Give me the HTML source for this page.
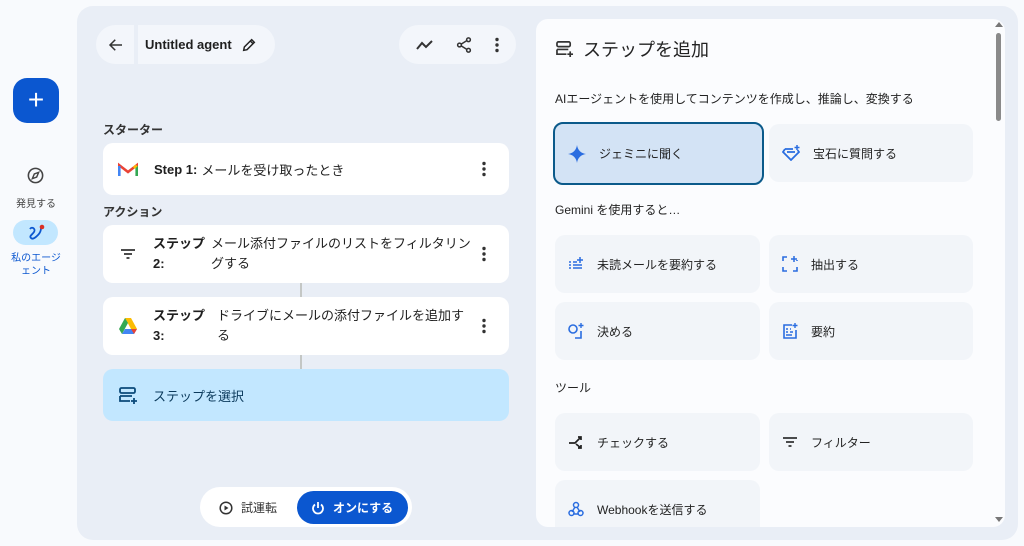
<!DOCTYPE html>
<html><head><meta charset="utf-8"><style>
*{box-sizing:border-box;margin:0;padding:0}
body{width:1024px;height:546px;background:#f8fafd;font-family:"Liberation Sans","Noto Sans CJK JP",sans-serif;color:#1f1f1f;position:relative;overflow:hidden}
.abs{position:absolute}
.main{left:77px;top:6px;width:941px;height:534px;background:#e9eef6;border-radius:16px}
.fab{left:13px;top:78px;width:46px;height:45px;background:#0b57d0;border-radius:14px;color:#fff;font-size:28px;line-height:43px;text-align:center;font-weight:300}
.nav{font-size:10px;color:#444;text-align:center}
.pill{background:#f3f6fb;border-radius:20px;display:flex;align-items:center}
.card{left:103px;width:406px;background:#fff;border-radius:10px;display:flex;align-items:center;font-size:13px}
.lbl{font-size:12px;color:#333;font-weight:bold}
.dots{position:absolute;right:22px;top:50%;transform:translateY(-50%)}
.rp{left:536px;top:19px;width:469px;height:508px;background:#fbfcfe;border-radius:12px;overflow:hidden}
.opt{position:absolute;background:#f2f5f9;border-radius:10px;display:flex;align-items:center;font-size:12px;color:#222}
.opt svg{margin-left:13px;margin-right:13px}
.sec{position:absolute;font-size:12px;color:#222;left:19px}
</style></head><body>
<div class="abs fab">+</div>
<svg class="abs" style="left:26px;top:166px" width="19" height="19" viewBox="0 0 24 24"><circle cx="12" cy="12" r="9" fill="none" stroke="#444" stroke-width="2"/><path d="M8 16l2.5-6 5.5-2-2.5 6z" fill="none" stroke="#444" stroke-width="1.8"/></svg>
<div class="abs nav" style="left:0;width:72px;top:195px">発見する</div>
<div class="abs" style="left:13px;top:220px;width:45px;height:25px;background:#c2e7ff;border-radius:13px"></div>
<svg class="abs" style="left:26px;top:223px" width="20" height="20" viewBox="0 0 20 20"><path d="M4 6c2-3 6 0 4 3s-5 4-3 6 5-1 7-3 3-4 3-7" fill="none" stroke="#0b57d0" stroke-width="1.8"/><circle cx="16" cy="4" r="2.3" fill="#d93025"/></svg>
<div class="abs nav" style="left:0;width:72px;top:252px;color:#0b57d0;line-height:13px">私のエージ<br>ェント</div>

<div class="abs main"></div>
<div class="abs pill" style="left:96px;top:25px;width:38px;height:39px;border-radius:20px 0 0 20px"><svg style="margin-left:11px" width="18" height="18" viewBox="0 0 24 24"><path d="M20 12H5M11 5l-7 7 7 7" fill="none" stroke="#333" stroke-width="2"/></svg></div>
<div class="abs pill" style="left:138px;top:25px;width:137px;height:39px;border-radius:0 20px 20px 0;font-size:13px;font-weight:600;padding-left:7px">Untitled agent<svg style="margin-left:9px" width="16" height="16" viewBox="0 0 24 24"><path d="M4 20l1-5L16 4l4 4L9 19z M14 6l4 4" fill="none" stroke="#222" stroke-width="2.2"/></svg></div>
<div class="abs pill" style="left:399px;top:25px;width:117px;height:39px;justify-content:space-around;padding:0 6px">
<svg width="20" height="14" viewBox="0 0 20 14"><path d="M2 11l5-6 4 4 6-6" fill="none" stroke="#333" stroke-width="2"/></svg>
<svg width="18" height="18" viewBox="0 0 24 24"><circle cx="18" cy="5" r="2.5" fill="none" stroke="#333" stroke-width="2"/><circle cx="6" cy="12" r="2.5" fill="none" stroke="#333" stroke-width="2"/><circle cx="18" cy="19" r="2.5" fill="none" stroke="#333" stroke-width="2"/><path d="M8 11l8-5M8 13l8 5" stroke="#333" stroke-width="2"/></svg>
<svg width="6" height="16" viewBox="0 0 6 16"><circle cx="3" cy="2.5" r="1.7" fill="#333"/><circle cx="3" cy="8" r="1.7" fill="#333"/><circle cx="3" cy="13.5" r="1.7" fill="#333"/></svg></div>

<div class="abs lbl" style="left:103px;top:121px">スターター</div>
<div class="abs card" style="top:143px;height:52px"><svg style="margin:0 16px 0 15px" width="20" height="15" viewBox="0 0 20 15"><path d="M1 14V3l9 7 9-7v11" fill="none" stroke="#ea4335" stroke-width="2.6"/><path d="M1.3 14V4" stroke="#4285f4" stroke-width="2.6"/><path d="M18.7 14V4" stroke="#34a853" stroke-width="2.6"/><path d="M18.7 3.5l-3 2.3" stroke="#fbbc04" stroke-width="2.6"/></svg><b style="margin-right:4px">Step 1:</b> メールを受け取ったとき<svg class="dots" width="6" height="16" viewBox="0 0 6 16"><circle cx="3" cy="2.5" r="1.7" fill="#333"/><circle cx="3" cy="8" r="1.7" fill="#333"/><circle cx="3" cy="13.5" r="1.7" fill="#333"/></svg></div>
<div class="abs lbl" style="left:103px;top:203px">アクション</div>
<div class="abs card" style="top:225px;height:58px;line-height:20px"><svg style="margin:0 17px 0 17px" width="16" height="12" viewBox="0 0 16 12"><path d="M1 2h14M4 6h8M6.5 10h3" stroke="#333" stroke-width="1.8"/></svg><b style="width:58px">ステップ<br>2:</b><span style="width:270px">メール添付ファイルのリストをフィルタリングする</span><svg class="dots" width="6" height="16" viewBox="0 0 6 16"><circle cx="3" cy="2.5" r="1.7" fill="#333"/><circle cx="3" cy="8" r="1.7" fill="#333"/><circle cx="3" cy="13.5" r="1.7" fill="#333"/></svg></div>
<div class="abs" style="left:300px;top:283px;width:2px;height:14px;background:#c4c7c5"></div>
<div class="abs card" style="top:297px;height:58px;line-height:20px"><svg style="margin:0 15px 0 15px" width="20" height="18" viewBox="0 0 20 18"><path d="M7 1h6l6 11H13z" fill="#fbbc04"/><path d="M7 1L1 12l3 5 6-11z" fill="#34a853"/><path d="M4 17h12l3-5H7z" fill="#4285f4"/><path d="M16 17l3-5h-6z" fill="#ea4335"/></svg><b style="width:64px">ステップ<br>3:</b><span style="width:255px">ドライブにメールの添付ファイルを追加する</span><svg class="dots" width="6" height="16" viewBox="0 0 6 16"><circle cx="3" cy="2.5" r="1.7" fill="#333"/><circle cx="3" cy="8" r="1.7" fill="#333"/><circle cx="3" cy="13.5" r="1.7" fill="#333"/></svg></div>
<div class="abs" style="left:300px;top:355px;width:2px;height:14px;background:#c4c7c5"></div>
<div class="abs card" style="top:369px;height:52px;background:#c2e7ff;color:#0b3a5c"><svg style="margin:0 15px 0 16px" width="19" height="18" viewBox="0 0 19 18"><rect x="1" y="2" width="15" height="5" rx="1.5" fill="none" stroke="#0b4a7a" stroke-width="1.8"/><path d="M1 10v5h10M1 10h12" fill="none" stroke="#0b4a7a" stroke-width="1.8"/><path d="M15 12v6M12 15h6" stroke="#0b4a7a" stroke-width="1.8"/></svg>ステップを選択</div>

<div class="abs" style="left:200px;top:487px;width:212px;height:40px;background:#fff;border-radius:20px"></div>
<div class="abs" style="left:219px;top:499px;font-size:12px;color:#333;display:flex;align-items:center"><svg width="14" height="14" viewBox="0 0 14 14" style="margin-right:8px"><circle cx="7" cy="7" r="5.8" fill="none" stroke="#333" stroke-width="1.5"/><path d="M5.5 4.5v5l4-2.5z" fill="#333"/></svg>試運転</div>
<div class="abs" style="left:297px;top:491px;width:111px;height:33px;background:#0b57d0;border-radius:17px;color:#fff;font-size:12px;font-weight:bold;display:flex;align-items:center;padding-left:14px"><svg width="14" height="14" viewBox="0 0 14 14" style="margin-right:8px"><path d="M4 3.5A5 5 0 1 0 10 3.5M7 1v6" fill="none" stroke="#fff" stroke-width="1.8"/></svg>オンにする</div>

<div class="abs rp">
<svg class="abs" style="left:20px;top:21px" width="18" height="17" viewBox="0 0 19 18"><rect x="1" y="2" width="14" height="5" rx="1.5" fill="none" stroke="#333" stroke-width="1.8"/><path d="M1 10v5h10M1 10h12" fill="none" stroke="#333" stroke-width="1.8"/><path d="M15 12v6M12 15h6" stroke="#333" stroke-width="1.8"/></svg>
<div class="abs" style="left:47px;top:17px;font-size:18px;color:#222">ステップを追加</div>
<div class="sec" style="top:71px">AIエージェントを使用してコンテンツを作成し、推論し、変換する</div>
<div class="opt" style="left:17px;top:103px;width:211px;height:63px;background:#d3e3f5;border:2px solid #0b5a8a"><svg width="18" height="18" viewBox="0 0 18 18"><path d="M9 0C9.6 5 13 8.4 18 9 13 9.6 9.6 13 9 18 8.4 13 5 9.6 0 9 5 8.4 8.4 5 9 0z" fill="#2a6de0"/></svg>ジェミニに聞く</div>
<div class="opt" style="left:233px;top:105px;width:204px;height:58px"><svg width="18" height="16" viewBox="0 0 18 16"><path d="M3 4h8M3 4L1 7l8 8 8-8-1.5-2M5 7h8" fill="none" stroke="#2a6de0" stroke-width="1.8"/><path d="M15 0v5M12.5 2.5h5" stroke="#2a6de0" stroke-width="1.5"/></svg>宝石に質問する</div>
<div class="sec" style="top:182px">Gemini を使用すると…</div>
<div class="opt" style="left:19px;top:216px;width:205px;height:58px"><svg width="16" height="14" viewBox="0 0 16 14"><path d="M1 5h2M5 5h4M1 8h2M5 8h9M1 11h2M5 11h9" stroke="#2a6de0" stroke-width="1.5"/><path d="M12 0v6M9 3h6" stroke="#2a6de0" stroke-width="1.5"/></svg>未読メールを要約する</div>
<div class="opt" style="left:233px;top:216px;width:204px;height:58px"><svg width="16" height="16" viewBox="0 0 16 16"><path d="M1 5V1h4M11 15h4v-4M1 11v4h4M15 5V4" fill="none" stroke="#2a6de0" stroke-width="1.6"/><path d="M12 0v6M9 3h6" stroke="#2a6de0" stroke-width="1.5"/></svg>抽出する</div>
<div class="opt" style="left:19px;top:283px;width:205px;height:58px"><svg width="16" height="16" viewBox="0 0 16 16"><circle cx="5" cy="6" r="4" fill="none" stroke="#2a6de0" stroke-width="1.6"/><path d="M7 15h6V8" fill="none" stroke="#2a6de0" stroke-width="1.6"/><path d="M13 0v5M10.5 2.5h5" stroke="#2a6de0" stroke-width="1.4"/></svg>決める</div>
<div class="opt" style="left:233px;top:283px;width:204px;height:58px"><svg width="16" height="16" viewBox="0 0 16 16"><path d="M10 2H2v13h12V7" fill="none" stroke="#2a6de0" stroke-width="1.6"/><path d="M4 6h2M4 9h2M4 12h6M8 6h1M8 9h3" stroke="#2a6de0" stroke-width="1.4"/><path d="M13 0v5M10.5 2.5h5" stroke="#2a6de0" stroke-width="1.4"/></svg>要約</div>
<div class="sec" style="top:360px">ツール</div>
<div class="opt" style="left:19px;top:394px;width:205px;height:58px"><svg width="16" height="16" viewBox="0 0 16 16"><path d="M1 9h6l6-6M10 3h3v3M8 10l5 4M13 11v3h-3" fill="none" stroke="#222" stroke-width="1.7"/></svg>チェックする</div>
<div class="opt" style="left:233px;top:394px;width:204px;height:58px"><svg width="16" height="12" viewBox="0 0 16 12"><path d="M1 2h14M4 6h8M6.5 10h3" stroke="#333" stroke-width="1.8"/></svg>フィルター</div>
<div class="opt" style="left:19px;top:461px;width:205px;height:58px"><svg width="16" height="16" viewBox="0 0 16 16"><circle cx="8" cy="4" r="2.5" fill="none" stroke="#2a6de0" stroke-width="1.5"/><circle cx="3.5" cy="12" r="2.5" fill="none" stroke="#2a6de0" stroke-width="1.5"/><circle cx="12.5" cy="12" r="2.5" fill="none" stroke="#2a6de0" stroke-width="1.5"/><path d="M7 6l-3 5M9 6l3 5M5 13h6" stroke="#2a6de0" stroke-width="1.4"/></svg>Webhookを送信する</div>
<div class="abs" style="left:460px;top:14px;width:5px;height:88px;background:#8a8a8a;border-radius:3px"></div>
<div class="abs" style="left:459px;top:3px;width:0;height:0;border-left:4px solid transparent;border-right:4px solid transparent;border-bottom:5px solid #777"></div>
<div class="abs" style="left:459px;top:498px;width:0;height:0;border-left:4px solid transparent;border-right:4px solid transparent;border-top:5px solid #777"></div>
</div>
</body></html>
